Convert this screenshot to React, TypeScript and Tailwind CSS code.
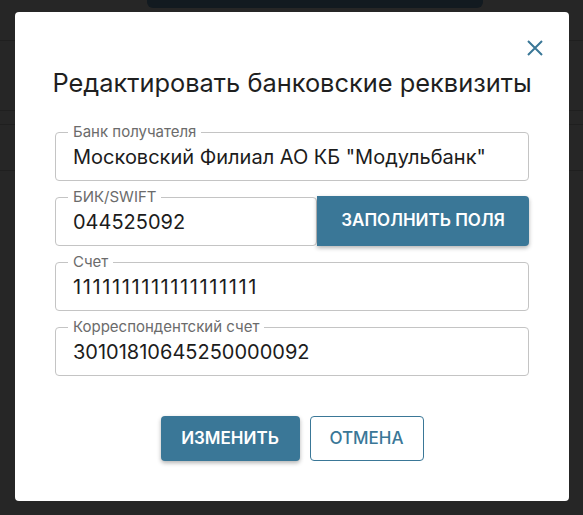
import React from "react";

const font = { fontFamily: "Inter, 'Noto Sans', sans-serif" };

function Field({ label, value, wide }: { label: string; value: string; wide?: boolean }) {
  return (
    <fieldset className="min-w-0 flex-1 rounded-[4px] border border-[#c4c4c4] pl-[17px] pr-[12px] pb-[11px]">
      <legend className="ml-[-5px] px-[5px] text-[15px] leading-[16px] text-[#6b6b6b]">
        {label}
      </legend>
      <div
        className={
          wide
            ? "mt-[5px] text-[20px] leading-[24px] tracking-[1.6px] text-[#1c1c1c]"
            : "mt-[5px] text-[20px] leading-[24px] text-[#1c1c1c]"
        }
      >
        {value}
      </div>
    </fieldset>
  );
}

export default function App() {
  return (
    <div className="relative h-[515px] w-[583px] overflow-hidden bg-[#262626]" style={font}>
      {/* dimmed page behind the dialog */}
      <div className="mx-[147px] h-[8px] w-[336px] rounded-b-[6px] bg-[#121a20]" />
      <div className="mt-[32px] border-t border-[#1f1f1f]" />
      <div className="mt-[69px] border-t border-[#1f1f1f]" />
      <div className="mt-[13px] border-t border-[#1f1f1f]" />
      <div className="mt-[45px] border-t border-[#1f1f1f]" />

      <div className="absolute left-[15px] top-[12px] h-[489px] w-[554px] rounded-[4px] bg-white">
        <div className="flex justify-end pr-[26px] pt-[28px]">
          <svg width="16" height="16" viewBox="0 0 16 16" className="text-[#3a7797]">
            <path d="M1 1L15 15M15 1L1 15" stroke="currentColor" strokeWidth="2" strokeLinecap="butt" />
          </svg>
        </div>
        <h2 className="mt-[12px] text-center text-[25.4px] leading-[30px] text-[#1f1f1f]">
          Редактировать банковские реквизиты
        </h2>
        <div className="mt-[26px] flex flex-col gap-[8px] px-[40px]">
          <Field label="Банк получателя" value={'Московский Филиал АО КБ "Модульбанк"'} />
          <div className="flex items-end">
            <Field label="БИК/SWIFT" value="044525092" />
            <button className="h-[50px] w-[212px] rounded-r-[4px] bg-[#3a7797] text-[17px] font-semibold text-white shadow-[0_2px_4px_rgba(0,0,0,0.3)]">
              ЗАПОЛНИТЬ ПОЛЯ
            </button>
          </div>
          <Field label="Счет" value="1111111111111111111" wide />
          <Field label="Корреспондентский счет" value="30101810645250000092" />
        </div>
        <div className="mt-[40px] flex justify-center gap-[10px]">
          <button className="h-[45px] w-[139px] rounded-[4px] bg-[#3a7797] text-[17px] font-semibold text-white shadow-[0_2px_4px_rgba(0,0,0,0.3)]">
            ИЗМЕНИТЬ
          </button>
          <button className="h-[45px] w-[114px] rounded-[4px] border border-[#3a7797] text-[17px] font-medium text-[#3a7797]">
            ОТМЕНА
          </button>
        </div>
      </div>
    </div>
  );
}
